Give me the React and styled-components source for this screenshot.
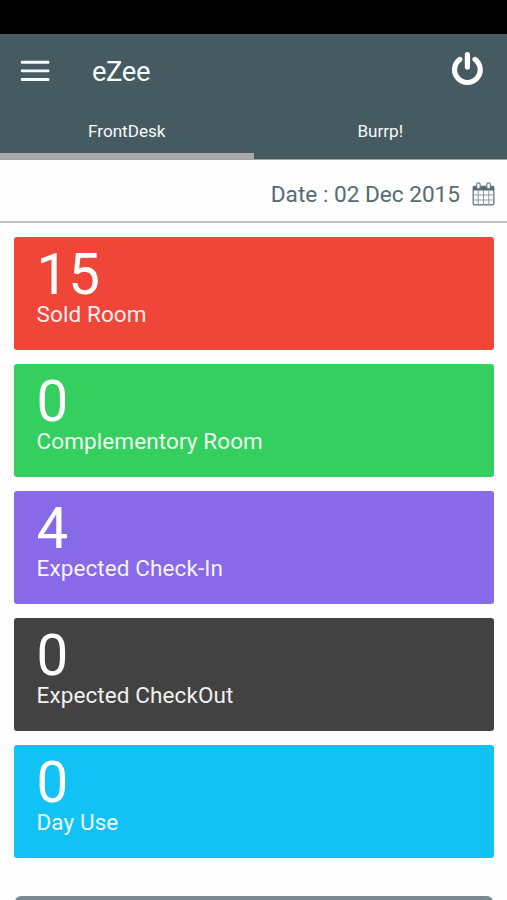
import React from 'react'
import { useState } from 'react'
import styled, { createGlobalStyle, css } from 'styled-components'

const GlobalStyle = createGlobalStyle`
* {
  box-sizing: border-box;
}
body {
  margin: 0;
  background: #fff;
  font-family: Roboto, sans-serif;
}
`;

const Screen = styled.div`
height: 900px;
overflow: hidden;
display: flex;
flex-direction: column;
background: #fefefe;
`;

const StatusBar = styled.div`
flex: none;
height: 34px;
background: #000;
`;

const Header = styled.header`
flex: none;
height: 126px;
display: flex;
flex-direction: column;
background: #465a62;
border-bottom: 1px solid #9aa6aa;
color: #f4fafc;
`;

const Toolbar = styled.div`
height: 75px;
display: flex;
align-items: flex-start;
padding: 17px 23px 0 20px;
`;

const IconButton = styled.button`
display: flex;
padding: 0;
border: 0;
background: none;
color: inherit;
cursor: pointer;
`;

const MenuButton = styled(IconButton)`
margin-top: 8px;
`;

const Title = styled.h1`
flex: 1;
margin: 5px 0 0 42px;
font-size: 27.4px;
font-weight: 400;
line-height: 32px;
letter-spacing: -0.4px;
`;

const Tabs = styled.nav`
flex: 1;
display: flex;
`;

const Tab = styled.button`
flex: 1;
padding: 0;
border: 0;
border-bottom: 6px solid transparent;
background: none;
color: inherit;
font: 400 17.1px/20px Roboto, sans-serif;
cursor: pointer;

${(props) => props.$active && css`
border-bottom-color: #a9a9a9;
`};
`;

const DateBar = styled.div`
flex: none;
height: 63px;
display: flex;
align-items: center;
justify-content: flex-end;
gap: 12px;
padding: 7px 12px 0 0;
border-bottom: 2px solid #bcc2c4;
color: #566b72;
`;

const DateText = styled.span`
margin-top: 2px;
font-size: 22.6px;
line-height: 28px;
`;

const CardList = styled.main`
display: flex;
flex-direction: column;
gap: 14px;
padding: 14.4px 13px 0 13.5px;
`;

const Card = styled.section`
flex: none;
height: 113px;
padding: 14px 23px 0;
border-radius: 3px;
background: ${(props) => props.$color};
color: #fff;
`;

const Count = styled.div`
font-size: 56.5px;
line-height: 48px;
`;

const Label = styled.div`
margin-top: 2px;
font-size: 22.5px;
line-height: 26px;
letter-spacing: 0.1px;
opacity: 0.92;
`;

const NextPanel = styled.section`
flex: none;
height: 60px;
margin: 37.6px 14px 0 15px;
border-radius: 6px;
background: #7b8a90;
`;

const MenuIcon = () => (
  <svg width="30" height="24" viewBox="0 0 30 24" fill="currentColor">
    <rect x="0.8" y="1.8" width="28.6" height="2.9" rx="1" />
    <rect x="0.8" y="10.4" width="28.6" height="2.9" rx="1" />
    <rect x="0.8" y="19" width="28.6" height="2.9" rx="1" />
  </svg>
)

const PowerIcon = () => (
  <svg width="34" height="36" viewBox="0 0 34 36" fill="none" stroke="#fff" strokeWidth="5.2" strokeLinecap="round">
    <path d="M17.4 3.5V16" />
    <path d="M9.8 8.4A12.8 12.8 0 1 0 25 8.4" />
  </svg>
)

const CalendarIcon = () => (
  <svg width="23" height="24" viewBox="0 0 23 24" fill="none" stroke="currentColor">
    <rect x="1.2" y="4.5" width="20.6" height="18.3" rx="1.2" stroke="#71838a" strokeWidth="1.4" />
    <path d="M1.2 4h20.6v4.5H1.2z" fill="currentColor" stroke="none" />
    <path d="M1 13h21M1 18h21M6.2 8v15M11.5 8v15M16.8 8v15" stroke="#8b999e" strokeWidth="1" />
    <rect x="4.6" y="0.9" width="3.6" height="6" rx="1.8" fill="#fff" stroke="#71838a" strokeWidth="1.2" />
    <rect x="14.8" y="0.9" width="3.6" height="6" rx="1.8" fill="#fff" stroke="#71838a" strokeWidth="1.2" />
  </svg>
)

const tabs = ['FrontDesk', 'Burrp!'];

const cards = [
  { count: 15, label: 'Sold Room', color: '#f0463a' },
  { count: 0, label: 'Complementory Room', color: '#34cf5f' },
  { count: 4, label: 'Expected Check-In', color: '#886ae8' },
  { count: 0, label: 'Expected CheckOut', color: '#434243' },
  { count: 0, label: 'Day Use', color: '#12c2f5' },
];

const App = () => {
  const [activeTab, setActiveTab] = useState('FrontDesk');

  return (
    <Screen>
      <GlobalStyle />
      <StatusBar />
      <Header>
        <Toolbar>
          <MenuButton aria-label="Menu"><MenuIcon /></MenuButton>
          <Title>eZee</Title>
          <IconButton aria-label="Log out"><PowerIcon /></IconButton>
        </Toolbar>
        <Tabs>
          {tabs.map((tab) => (
            <Tab key={tab} $active={tab === activeTab} onClick={() => setActiveTab(tab)}>{tab}</Tab>
          ))}
        </Tabs>
      </Header>
      <DateBar>
        <DateText>Date : 02 Dec 2015</DateText>
        <CalendarIcon />
      </DateBar>
      <CardList>
        {cards.map((card) => (
          <Card key={card.label} $color={card.color}>
            <Count>{card.count}</Count>
            <Label>{card.label}</Label>
          </Card>
        ))}
      </CardList>
      <NextPanel />
    </Screen>
  )
}

export default App
